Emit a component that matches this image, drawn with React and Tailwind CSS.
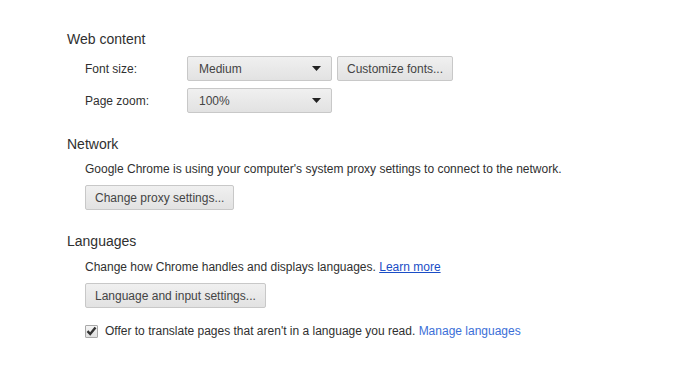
export default function App() {
  const selectCls = "flex items-center justify-between w-[145px] h-[25px] pl-[11px] pr-[10px] border border-[#c8c8c8] rounded-[2px] bg-gradient-to-b from-[#f0f0f0] to-[#e2e2e2] text-[#444]"
  const btnCls = "h-[25px] px-[9px] border border-[#c8c8c8] rounded-[2px] bg-gradient-to-b from-[#f0f0f0] to-[#e2e2e2] text-[#444] leading-none"

  function Arrow() {
    return (
      <svg width="9" height="5" viewBox="0 0 9 5">
        <path d="M0 0 H9 L4.5 5 Z" fill="#222" />
      </svg>
    )
  }

  return (
    <div className="w-[700px] h-[369px] bg-white font-['Liberation_Sans',sans-serif] text-[12px] text-[#303030] pl-[67px] pt-[30px]">
      <h3 className="text-[14px] leading-[18px]">Web content</h3>
      <div className="pl-[18px] mt-[8px] flex flex-col gap-[7px]">
        <div className="flex items-center">
          <span className="w-[102px]">Font size:</span>
          <div className={selectCls}>
            <span>Medium</span>
            <Arrow />
          </div>
          <button className={btnCls + " ml-[5px]"}>Customize fonts...</button>
        </div>
        <div className="flex items-center">
          <span className="w-[102px]">Page zoom:</span>
          <div className={selectCls}>
            <span>100%</span>
            <Arrow />
          </div>
        </div>
      </div>

      <h3 className="text-[14px] leading-[18px] mt-[22px]">Network</h3>
      <div className="pl-[18px] mt-[8px]">
        <p className="leading-[16px]">Google Chrome is using your computer's system proxy settings to connect to the network.</p>
        <button className={btnCls + " mt-[8px]"}>Change proxy settings...</button>
      </div>

      <h3 className="text-[14px] leading-[18px] mt-[22px]">Languages</h3>
      <div className="pl-[18px] mt-[9px]">
        <p className="leading-[16px]">
          Change how Chrome handles and displays languages.{" "}
          <span className="text-[#1a4dc6] underline">Learn more</span>
        </p>
        <button className={btnCls + " mt-[8px]"}>Language and input settings...</button>
        <div className="flex items-center mt-[14px]">
          <div className="w-[13px] h-[13px] border border-[#a8a8a8] rounded-[1px] bg-gradient-to-b from-[#f4f4f4] to-[#e0e0e0] flex items-center justify-center">
            <svg width="11" height="10" viewBox="0 0 11 10">
              <path d="M1.5 5.2 L4.2 8 L9.5 1.5" fill="none" stroke="#333" strokeWidth="2.4" />
            </svg>
          </div>
          <span className="ml-[7px]">
            Offer to translate pages that aren't in a language you read.{" "}
            <span className="text-[#3b6fd8]">Manage languages</span>
          </span>
        </div>
      </div>
    </div>
  )
}
